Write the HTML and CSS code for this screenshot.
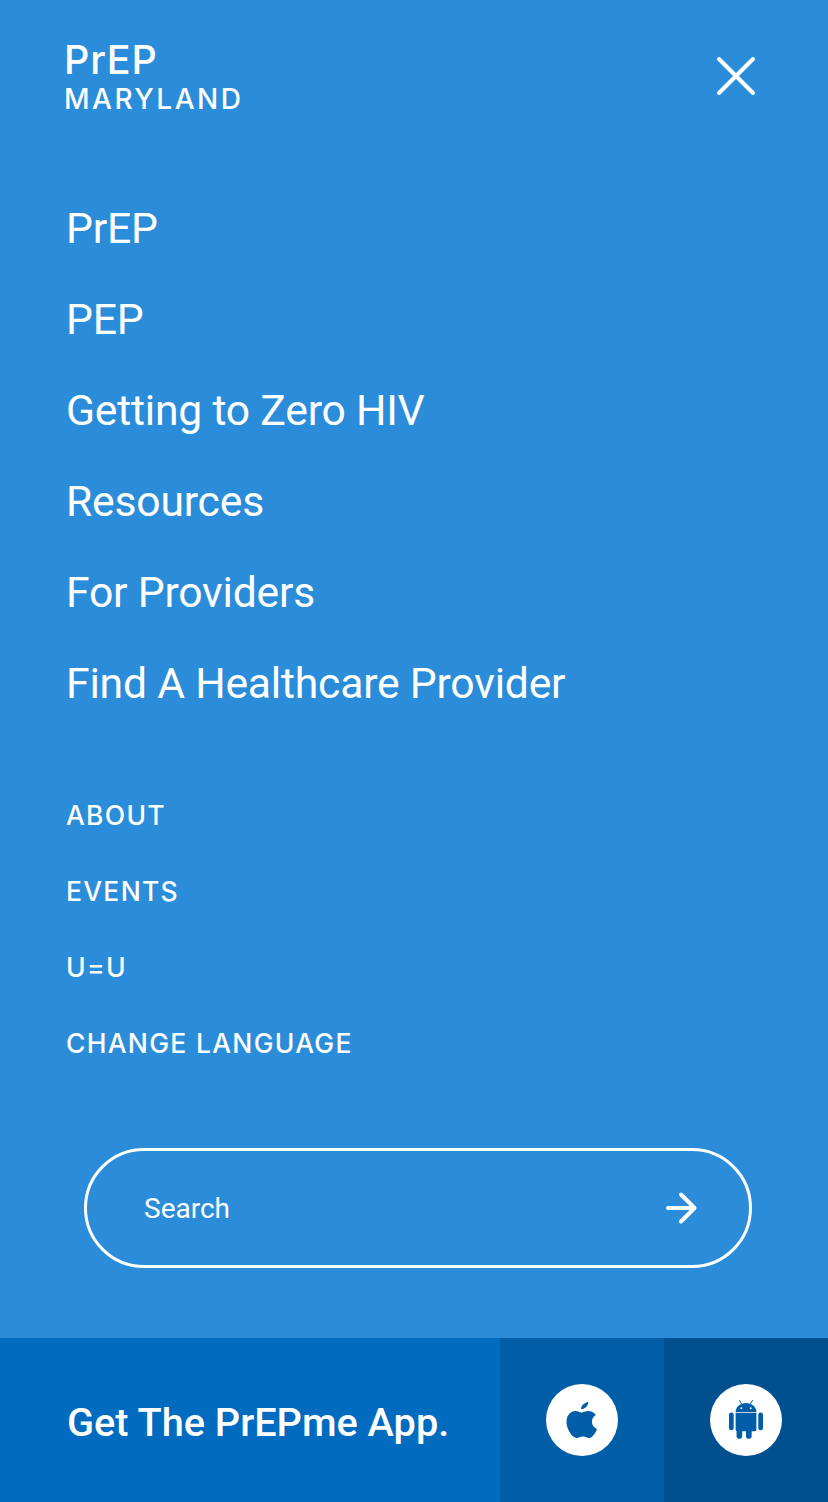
FILE: index.html
```html
<!DOCTYPE html>
<html lang="en">
<head>
<meta charset="utf-8">
<title>PrEP Maryland</title>
<link rel="stylesheet" href="styles.css">
</head>
<body>
<div class="menu">
  <header class="top">
    <a class="logo" href="#"><span class="logo-a">PrEP</span><span class="logo-b">MARYLAND</span></a>
    <button class="close" aria-label="Close">
      <svg width="40" height="40" viewBox="0 0 40 40" fill="none" stroke="#fff" stroke-width="4" stroke-linecap="round"><path d="M3 3 37 37M37 3 3 37"/></svg>
    </button>
  </header>
  <nav class="main-nav">
    <a href="#">PrEP</a>
    <a href="#">PEP</a>
    <a href="#">Getting to Zero HIV</a>
    <a href="#">Resources</a>
    <a href="#">For Providers</a>
    <a href="#">Find A Healthcare Provider</a>
  </nav>
  <nav class="sub-nav">
    <a href="#">ABOUT</a>
    <a href="#">EVENTS</a>
    <a href="#">U=U</a>
    <a href="#">CHANGE LANGUAGE</a>
  </nav>
  <form class="search">
    <span class="search-label">Search</span>
    <svg width="34" height="34" viewBox="0 0 34 34" fill="none" stroke="#fff" stroke-width="4" stroke-linecap="round" stroke-linejoin="round"><path d="M3 17H29M16 3.500 29.500 17 16 30.500"/></svg>
  </form>
  <footer class="app">
    <div class="app-title">Get The PrEPme App.</div>
    <a class="store store-apple" href="#" aria-label="Apple">
      <span class="disc">
        <svg width="32" height="38" viewBox="0 0 32 38" fill="#005ea8"><path d="M22.3 1c.2 3-2.800 7-7.200 7.200C14.700 5 18.200 1.500 22.300 1zM9.500 10c2.500 0 4.300 1.500 6 1.500S19.500 10 22.500 10c2.700 0 5.500 1.300 7.300 3.900-5.800 3.500-4.800 11.500 1.200 14-1.300 3.500-4.600 9-7.800 9.100-2.500 0-3.400-1.500-6.300-1.500s-3.900 1.500-6.300 1.500C6.500 37 .5 28.500.5 21 .5 14 4.800 10 9.500 10z"/></svg>
      </span>
    </a>
    <a class="store store-android" href="#" aria-label="Android">
      <span class="disc">
        <svg class="android" width="34" height="40" viewBox="0 0 36 42" fill="#005ea8"><path d="M11 1l2.500 4.500M25 1l-2.500 4.500" stroke="#005ea8" stroke-width="1" fill="none"/><path d="M7 13.500C7 8 12 4 18 4s11 4 11 9.500z"/><path d="M7 14.500h22V32a2 2 0 0 1-2 2h-3v5a3 3 0 0 1-6 0v-5h-4v5a3 3 0 0 1-6 0v-5H9a2 2 0 0 1-2-2z"/><rect x="0" y="14" width="5" height="19" rx="2.500"/><rect x="31" y="14" width="5" height="19" rx="2.500"/><circle cx="13" cy="9.500" r="1" fill="#fff"/><circle cx="23" cy="9.500" r="1" fill="#fff"/></svg>
      </span>
    </a>
  </footer>
</div>
</body>
</html>
```
FILE: styles.css
```css
* { box-sizing: border-box; }
html, body { margin: 0; padding: 0; }
body { background: #2b8dda; color: #fff; font-family: Roboto, sans-serif; }
a { color: inherit; text-decoration: none; }
.menu { width: 828px; height: 1502px; display: flex; flex-direction: column; overflow: hidden; }
.top { display: flex; justify-content: space-between; align-items: flex-start; padding: 37px 72px 0 64px; height: 183px; }
.logo { display: flex; flex-direction: column; font-family: Inter, sans-serif; font-weight: 500; }
.logo-a { font-size: 39.5px; line-height: 46px; letter-spacing: 0.8px; }
.logo-b { font-size: 28px; line-height: 32px; letter-spacing: 2.5px; }
.close { margin-top: 19px; padding: 0; border: 0; background: none; display: block; width: 40px; height: 40px; }
.main-nav { display: flex; flex-direction: column; padding-left: 66px; }
.main-nav a { font-size: 42.67px; line-height: 91px; height: 91px; letter-spacing: -0.2px; }
.sub-nav { display: flex; flex-direction: column; padding-left: 66px; margin-top: 48px; font-family: Inter, sans-serif; }
.sub-nav a { font-size: 26.5px; line-height: 76px; height: 76px; letter-spacing: 1.3px; font-weight: 500; }
.search { margin: 67px 0 0 84px; width: 668px; height: 120px; border: 3px solid #fff; border-radius: 60px; display: flex; align-items: center; justify-content: space-between; padding: 0 50px 0 57px; }
.search-label { font-size: 28px; }
.app { margin-top: auto; height: 164px; display: flex; }
.app-title { width: 500px; background: #006bbf; padding: 4px 0 0 67px; font-size: 39.7px; font-weight: 500; display: flex; align-items: center; }
.store { width: 164px; display: flex; align-items: center; justify-content: center; }
.store-apple { background: #005ea8; }
.store-android { background: #005090; }
.disc { width: 72px; height: 72px; border-radius: 50%; background: #fff; display: flex; align-items: center; justify-content: center; }
.android { margin-top: -3px; }
```
